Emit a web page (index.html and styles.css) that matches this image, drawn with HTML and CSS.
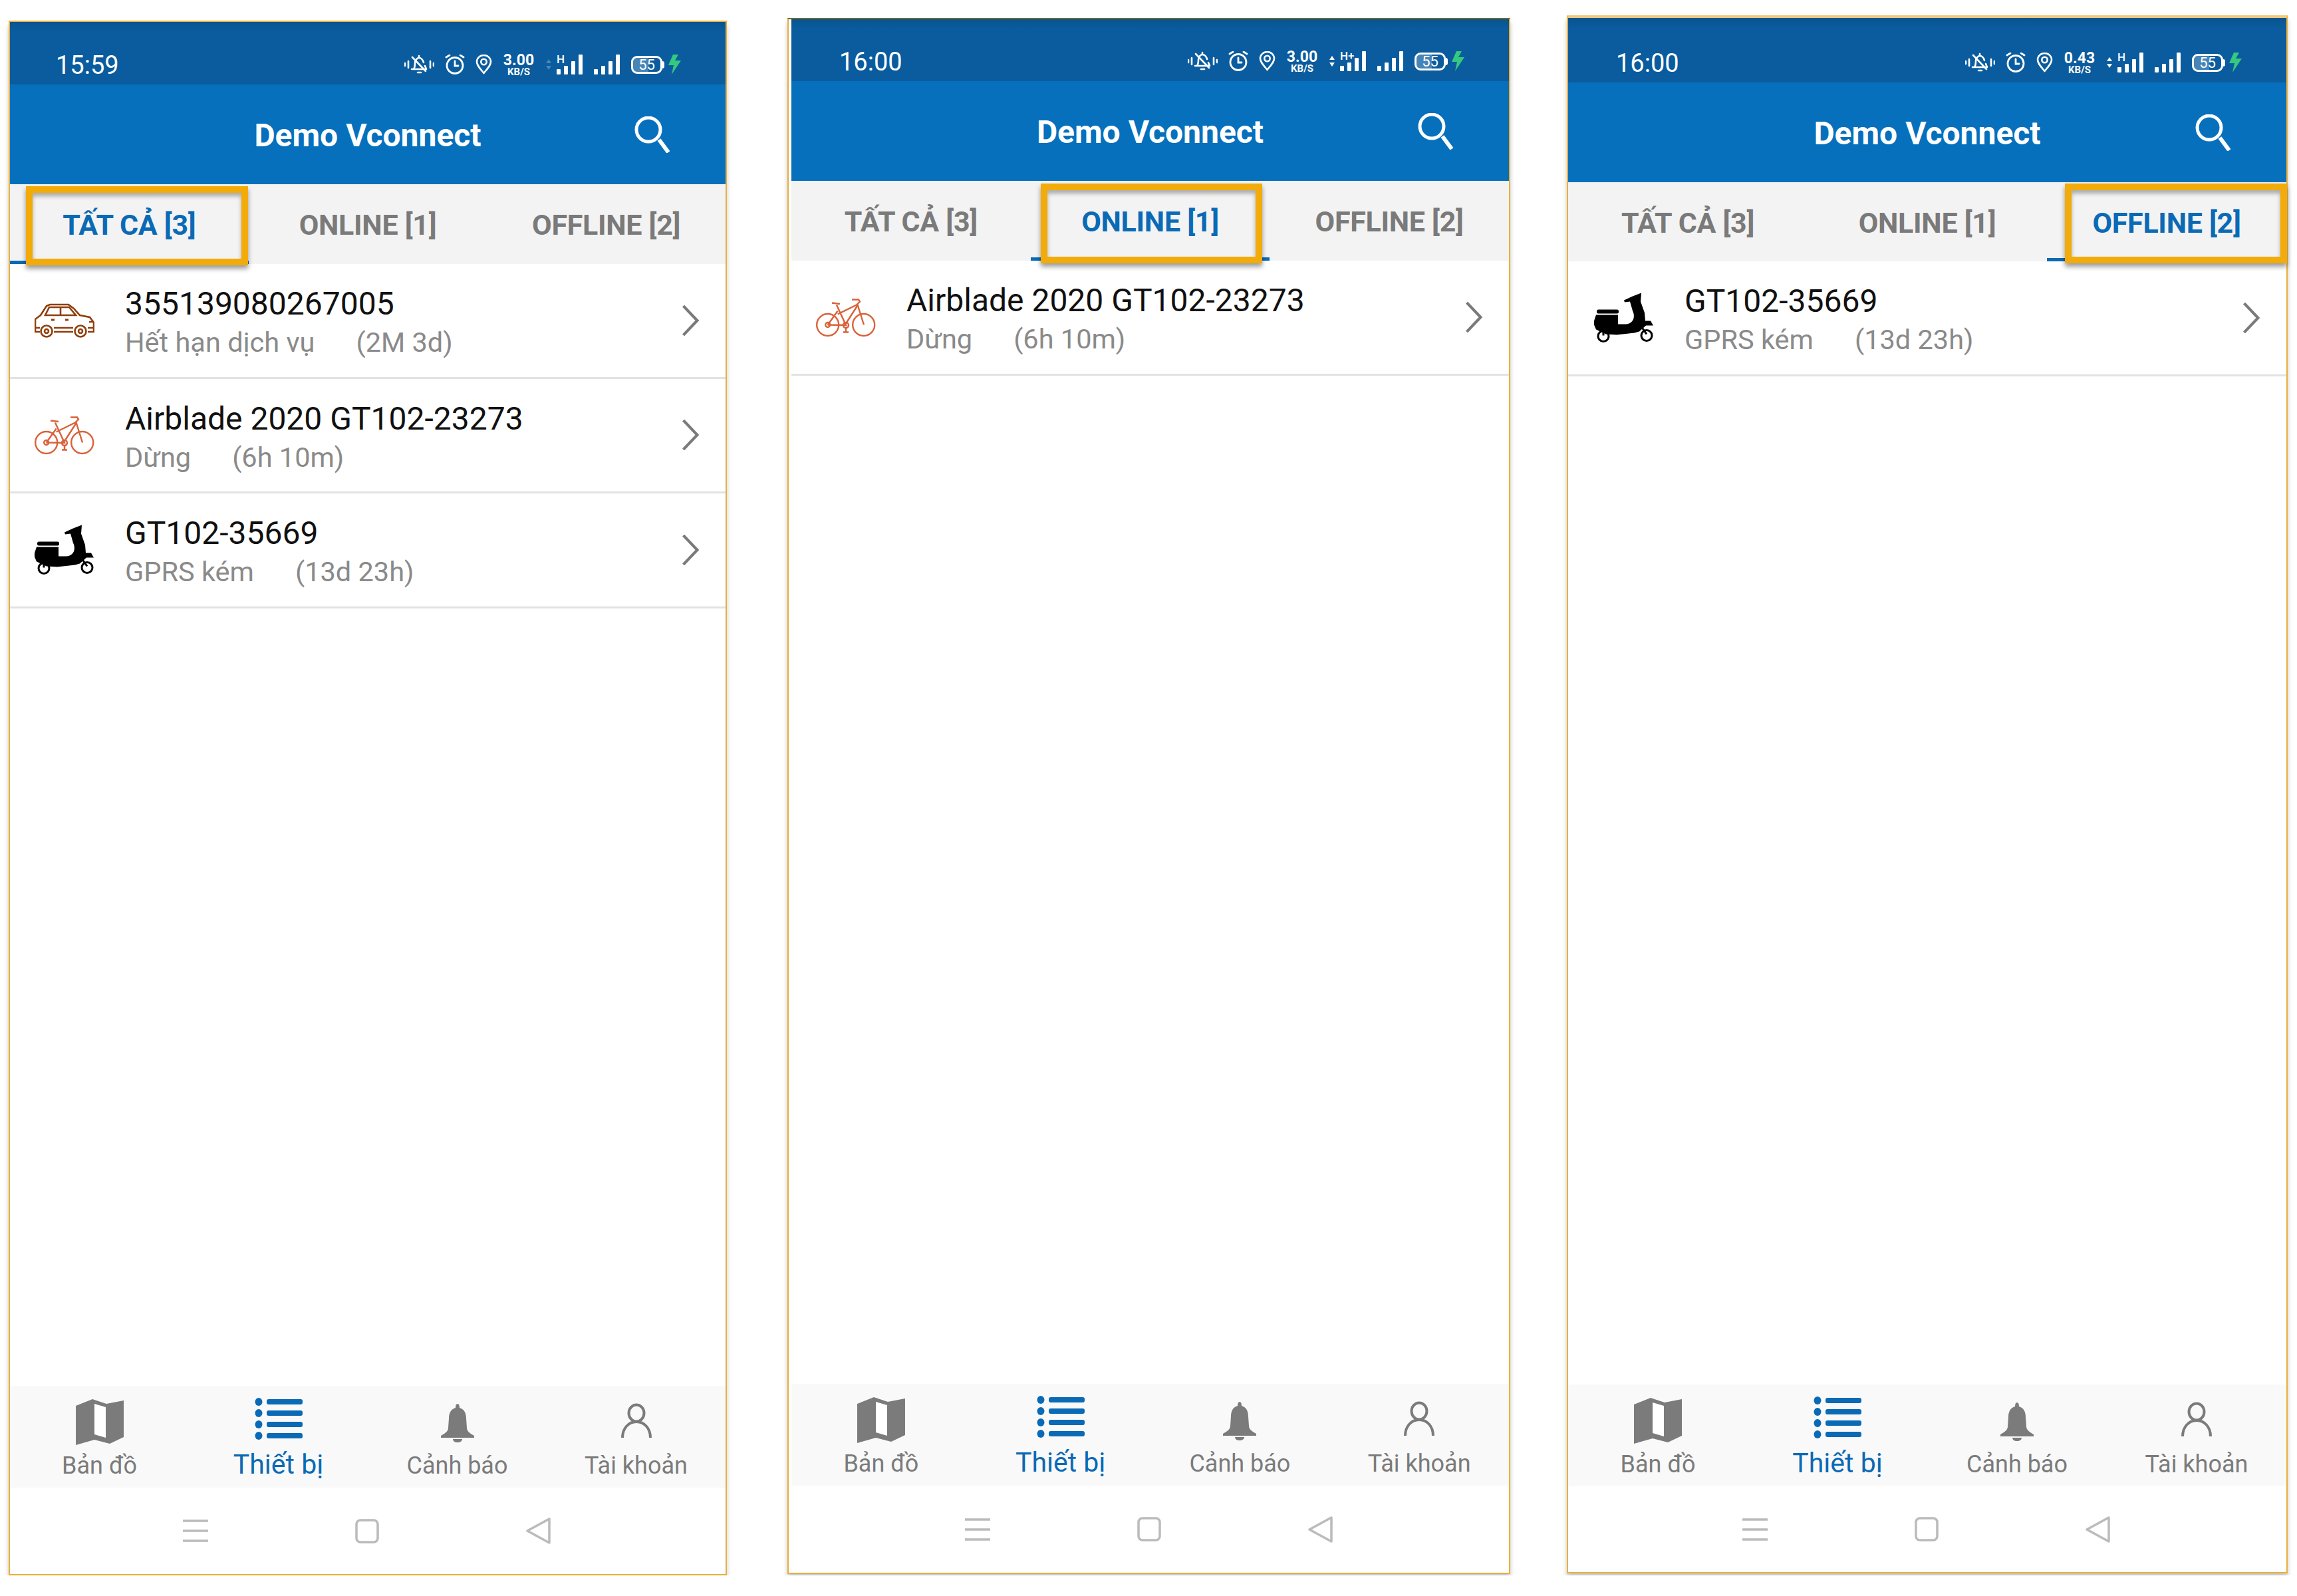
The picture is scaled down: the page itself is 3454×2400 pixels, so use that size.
FILE: index.html
```html
<!DOCTYPE html>
<html lang="vi">
<head>
<meta charset="utf-8">
<title>Demo Vconnect</title>
<link rel="stylesheet" href="styles.css">
</head>
<body>

<svg class="defs" width="0" height="0">
	<defs>
		<symbol id="i-bell-off" viewBox="0 0 45 30">
			<g fill="none" stroke="#fff" stroke-width="2.6" stroke-linecap="round" stroke-linejoin="round">
				<path d="M1 13v4M6 10v10M39 10v10M44 13v4"/>
				<path d="M22 2v2M14 22c2-3 2-6 2-9 0-4 3-8 6-8 3 0 6 3 7 7M31 17l2 5H11"/>
				<path d="M12 4l20 21"/>
				<path d="M20 27h5"/>
			</g>
		</symbol>
		<symbol id="i-alarm" viewBox="0 0 30 30">
			<g fill="none" stroke="#fff" stroke-width="2.8" stroke-linecap="round">
				<circle cx="15" cy="16.5" r="12"/>
				<path d="M15 10v7h5M2 4l5-3M28 4l-5-3"/>
			</g>
		</symbol>
		<symbol id="i-pin" viewBox="0 0 25 30">
			<path d="M12.5 28C6 20 2 16 2 11a10.5 10 0 0 1 21 0c0 5-4 9-10.5 17z" fill="none" stroke="#fff" stroke-width="2.6" stroke-linejoin="round"/>
			<circle cx="12.5" cy="11" r="4.2" fill="none" stroke="#fff" stroke-width="2.6"/>
		</symbol>
		<symbol id="i-signal" viewBox="0 0 40 30">
			<rect x="0" y="22" width="6" height="8" rx="1" fill="#fff"/>
			<rect x="11" y="17" width="6" height="13" rx="1" fill="#fff"/>
			<rect x="22" y="10" width="6" height="20" rx="1" fill="#fff"/>
			<rect x="33" y="0" width="6" height="30" rx="1" fill="#fff"/>
		</symbol>
		<symbol id="i-arrows" viewBox="0 0 10 16">
			<path d="M5 0l4 6H1zM5 16l4-6H1z"/>
		</symbol>
		<symbol id="i-bolt" viewBox="0 0 19 30">
			<path d="M7 0L0 16h8L5 30 19 9h-9l5-9z" fill="#35c97f"/>
		</symbol>
		<symbol id="i-search" viewBox="0 0 57 55">
			<circle cx="21" cy="20" r="18" fill="none" stroke="#fff" stroke-width="5"/>
			<path d="M37 35l14 19" fill="none" stroke="#fff" stroke-width="6"/>
		</symbol>
		<symbol id="i-car" viewBox="0 0 90 100">
			<g transform="translate(0 25)" fill="none" stroke="#8f3e0c" stroke-width="2.6">
				<path d="M8 42H1V23l8-6 9-14 5-2h28l8 6 9 10 15 3 6 8v14h-9M29 42h29"/>
				<path d="M16 17l6-12h30l10 12zM39 5v12M29 36h29M1 36h7M80 36h9M82 27h7"/>
				<path d="M25 24h5M46 24h5" stroke-width="3"/>
				<circle cx="18" cy="41" r="8.5"/><circle cx="18" cy="41" r="3"/>
				<circle cx="69" cy="41" r="8.5"/><circle cx="69" cy="41" r="3"/>
			</g>
		</symbol>
		<symbol id="i-bike" viewBox="0 0 90 100">
			<g transform="translate(0 20.5)" fill="none" stroke="#d9623a" stroke-width="2.4">
				<circle cx="17.7" cy="41" r="16.5"/><circle cx="71.7" cy="41" r="16.5"/>
				<circle cx="17.7" cy="41" r="3.5"/><circle cx="45" cy="41.5" r="4"/>
				<path d="M17.7 41L45 41.500 31 11M24 8l12 1.500M45 39l18-28M32.700 25L61 11M17.700 41L32.700 20M62 9l10 32M54 3h10l2 3-5 5M45 45v6M41 52h8"/>
			</g>
		</symbol>
		<symbol id="i-scooter" viewBox="0 0 90 100">
			<g transform="translate(0 12.5)">
				<rect x="4" y="25" width="33" height="6" rx="2.500"/>
				<path d="M0 42l3-9h33v14h12c12-1 14-12 10-20l-4-14-8 1-1-3 13-6 13-5-1 13 6 17 1 12h8l4 7H78l-10 9-7 2-27 3-16-1-15-7-3-7z"/>
				<g fill="none" stroke="#000" stroke-width="3">
					<circle cx="14" cy="65" r="8"/><circle cx="79" cy="64" r="8"/>
					<path d="M14 58v6M72 52l7 10"/>
				</g>
			</g>
		</symbol>
		<symbol id="i-chevron" viewBox="0 0 25 44">
			<path d="M2 1l20 21L2 43" fill="none" stroke="#7a7a7a" stroke-width="4"/>
		</symbol>
		<symbol id="i-map" viewBox="0 0 72 72">
			<path d="M0 12l25-10 21 7L72 4v55L51 69 28 63 0 71z" fill="#7b7b7b"/>
			<path d="M28 9l17 5v46l-17-5z" fill="#fff"/>
		</symbol>
		<symbol id="i-list" viewBox="0 0 72 72">
			<g fill="#0a6ab5">
				<ellipse cx="6" cy="6" rx="5.500" ry="6"/><ellipse cx="6" cy="23" rx="5.500" ry="6"/>
				<ellipse cx="6" cy="40" rx="5.500" ry="6"/><ellipse cx="6" cy="57" rx="5.500" ry="6"/>
				<rect x="18" y="2" width="54" height="8" rx="3"/><rect x="18" y="19" width="54" height="8" rx="3"/>
				<rect x="18" y="36" width="54" height="8" rx="3"/><rect x="18" y="53" width="54" height="8" rx="3"/>
			</g>
		</symbol>
		<symbol id="i-alert" viewBox="0 0 72 72">
			<path d="M36 9c2 0 3 2 3 6 7 2 10 8 10 16l1 14c0 5 4 8 11 12v3H11v-3c7-4 11-7 11-12l1-14c0-8 3-14 10-16 0-4 1-6 3-6zM29 62h14c0 3-3 5-7 5s-7-2-7-5z" fill="#7b7b7b"/>
		</symbol>
		<symbol id="i-user" viewBox="0 0 72 72">
			<g fill="none" stroke="#7b7b7b" stroke-width="4">
				<ellipse cx="36" cy="23" rx="11.500" ry="12.500"/>
				<path d="M15 60c0-14 9-24 21-24s21 10 21 24"/>
			</g>
		</symbol>
		<symbol id="i-menu" viewBox="0 0 38 34">
			<path d="M0 2h38M0 17h38M0 32h38" stroke="#bbb" stroke-width="3.500"/>
		</symbol>
		<symbol id="i-square" viewBox="0 0 36 37">
			<rect x="2" y="2" width="32" height="33" rx="6" fill="none" stroke="#bbb" stroke-width="3.500"/>
		</symbol>
		<symbol id="i-back" viewBox="0 0 37 40">
			<path d="M35 2v36L2 20z" fill="none" stroke="#bbb" stroke-width="3.500" stroke-linejoin="round"/>
		</symbol>
	</defs>
</svg>

<div class="page">

	<!-- tat ca -->
	<section class="phone phone-all">
		<div class="status">
			<span class="clock">15:59</span>
			<div class="status-icons">
				<svg class="st-bell"><use href="#i-bell-off"/></svg>
				<svg class="st-alarm"><use href="#i-alarm"/></svg>
				<svg class="st-pin"><use href="#i-pin"/></svg>
				<div class="speed"><b>3.00</b><small>KB/S</small></div>
				<div class="net">
					<svg class="st-arrows st-arrows-dim"><use href="#i-arrows"/></svg>
					<div class="sig-wrap"><span class="sig-type">H</span><svg class="st-signal"><use href="#i-signal"/></svg></div>
				</div>
				<svg class="st-signal"><use href="#i-signal"/></svg>
				<div class="power">
					<div class="battery"><span>55</span></div>
					<svg class="st-bolt"><use href="#i-bolt"/></svg>
				</div>
			</div>
		</div>
		<header class="appbar">
			<h1>Demo Vconnect</h1>
			<svg class="search"><use href="#i-search"/></svg>
		</header>
		<nav class="tabs">
			<div class="tab active">TẤT CẢ [3]<i class="highlight"></i></div>
			<div class="tab">ONLINE [1]</div>
			<div class="tab">OFFLINE [2]</div>
		</nav>
		<ul class="list">
			<li class="row">
				<svg class="veh"><use href="#i-car"/></svg>
				<div class="row-text">
					<div class="row-title">355139080267005</div>
					<div class="row-sub"><span>Hết hạn dịch vụ</span><span>(2M 3d)</span></div>
				</div>
				<svg class="chevron"><use href="#i-chevron"/></svg>
			</li>
			<li class="row">
				<svg class="veh"><use href="#i-bike"/></svg>
				<div class="row-text">
					<div class="row-title">Airblade 2020 GT102-23273</div>
					<div class="row-sub"><span>Dừng</span><span>(6h 10m)</span></div>
				</div>
				<svg class="chevron"><use href="#i-chevron"/></svg>
			</li>
			<li class="row">
				<svg class="veh"><use href="#i-scooter"/></svg>
				<div class="row-text">
					<div class="row-title">GT102-35669</div>
					<div class="row-sub"><span>GPRS kém</span><span>(13d 23h)</span></div>
				</div>
				<svg class="chevron"><use href="#i-chevron"/></svg>
			</li>
		</ul>
		<footer class="bottom">
			<div class="bottom-item"><svg><use href="#i-map"/></svg><span>Bản đồ</span></div>
			<div class="bottom-item active"><svg><use href="#i-list"/></svg><span>Thiết bị</span></div>
			<div class="bottom-item"><svg><use href="#i-alert"/></svg><span>Cảnh báo</span></div>
			<div class="bottom-item"><svg><use href="#i-user"/></svg><span>Tài khoản</span></div>
		</footer>
		<div class="softkeys">
			<svg class="key-menu"><use href="#i-menu"/></svg>
			<svg class="key-square"><use href="#i-square"/></svg>
			<svg class="key-back"><use href="#i-back"/></svg>
		</div>
	</section>

	<!-- online -->
	<section class="phone phone-online">
		<div class="status">
			<span class="clock">16:00</span>
			<div class="status-icons">
				<svg class="st-bell"><use href="#i-bell-off"/></svg>
				<svg class="st-alarm"><use href="#i-alarm"/></svg>
				<svg class="st-pin"><use href="#i-pin"/></svg>
				<div class="speed"><b>3.00</b><small>KB/S</small></div>
				<div class="net">
					<svg class="st-arrows"><use href="#i-arrows"/></svg>
					<div class="sig-wrap"><span class="sig-type">H+</span><svg class="st-signal"><use href="#i-signal"/></svg></div>
				</div>
				<svg class="st-signal"><use href="#i-signal"/></svg>
				<div class="power">
					<div class="battery"><span>55</span></div>
					<svg class="st-bolt"><use href="#i-bolt"/></svg>
				</div>
			</div>
		</div>
		<header class="appbar">
			<h1>Demo Vconnect</h1>
			<svg class="search"><use href="#i-search"/></svg>
		</header>
		<nav class="tabs">
			<div class="tab">TẤT CẢ [3]</div>
			<div class="tab active">ONLINE [1]<i class="highlight"></i></div>
			<div class="tab">OFFLINE [2]</div>
		</nav>
		<ul class="list">
			<li class="row">
				<svg class="veh"><use href="#i-bike"/></svg>
				<div class="row-text">
					<div class="row-title">Airblade 2020 GT102-23273</div>
					<div class="row-sub"><span>Dừng</span><span>(6h 10m)</span></div>
				</div>
				<svg class="chevron"><use href="#i-chevron"/></svg>
			</li>
		</ul>
		<footer class="bottom">
			<div class="bottom-item"><svg><use href="#i-map"/></svg><span>Bản đồ</span></div>
			<div class="bottom-item active"><svg><use href="#i-list"/></svg><span>Thiết bị</span></div>
			<div class="bottom-item"><svg><use href="#i-alert"/></svg><span>Cảnh báo</span></div>
			<div class="bottom-item"><svg><use href="#i-user"/></svg><span>Tài khoản</span></div>
		</footer>
		<div class="softkeys">
			<svg class="key-menu"><use href="#i-menu"/></svg>
			<svg class="key-square"><use href="#i-square"/></svg>
			<svg class="key-back"><use href="#i-back"/></svg>
		</div>
	</section>

	<!-- offline -->
	<section class="phone phone-offline">
		<div class="status">
			<span class="clock">16:00</span>
			<div class="status-icons">
				<svg class="st-bell"><use href="#i-bell-off"/></svg>
				<svg class="st-alarm"><use href="#i-alarm"/></svg>
				<svg class="st-pin"><use href="#i-pin"/></svg>
				<div class="speed"><b>0.43</b><small>KB/S</small></div>
				<div class="net">
					<svg class="st-arrows"><use href="#i-arrows"/></svg>
					<div class="sig-wrap"><span class="sig-type">H</span><svg class="st-signal"><use href="#i-signal"/></svg></div>
				</div>
				<svg class="st-signal"><use href="#i-signal"/></svg>
				<div class="power">
					<div class="battery"><span>55</span></div>
					<svg class="st-bolt"><use href="#i-bolt"/></svg>
				</div>
			</div>
		</div>
		<header class="appbar">
			<h1>Demo Vconnect</h1>
			<svg class="search"><use href="#i-search"/></svg>
		</header>
		<nav class="tabs">
			<div class="tab">TẤT CẢ [3]</div>
			<div class="tab">ONLINE [1]</div>
			<div class="tab active">OFFLINE [2]<i class="highlight"></i></div>
		</nav>
		<ul class="list">
			<li class="row">
				<svg class="veh"><use href="#i-scooter"/></svg>
				<div class="row-text">
					<div class="row-title">GT102-35669</div>
					<div class="row-sub"><span>GPRS kém</span><span>(13d 23h)</span></div>
				</div>
				<svg class="chevron"><use href="#i-chevron"/></svg>
			</li>
		</ul>
		<footer class="bottom">
			<div class="bottom-item"><svg><use href="#i-map"/></svg><span>Bản đồ</span></div>
			<div class="bottom-item active"><svg><use href="#i-list"/></svg><span>Thiết bị</span></div>
			<div class="bottom-item"><svg><use href="#i-alert"/></svg><span>Cảnh báo</span></div>
			<div class="bottom-item"><svg><use href="#i-user"/></svg><span>Tài khoản</span></div>
		</footer>
		<div class="softkeys">
			<svg class="key-menu"><use href="#i-menu"/></svg>
			<svg class="key-square"><use href="#i-square"/></svg>
			<svg class="key-back"><use href="#i-back"/></svg>
		</div>
	</section>

</div>
</body>
</html>
```

FILE: styles.css
```css
* {
	box-sizing: border-box;
	font-family: Roboto, 'Liberation Sans', sans-serif;
}

body {
	margin: 0;
	background: #fff;
}

.defs {
	position: absolute;
}

.page {
	display: flex;
	align-items: flex-start;
	padding-left: 13px;
}

/* each screenshot was pasted a little differently */
.phone {
	display: flex;
	flex-direction: column;
	border: 2px solid #e8b03c;
	background: #fff;
	box-shadow: 0 7px 7px rgba(0,0,0,.22);
}

.phone-all {
	width: 1080px;
	height: 2338px;
	margin-top: 31px;
	--status-h: 94px;
	--tabs-h: 120px;
	--soft-h: 130px;
	--clock-left: 69px;
	--row-left: 37px;
}

.phone-online {
	width: 1087px;
	height: 2340px;
	margin: 27px 0 0 91px;
	padding-left: 4px;
	border-top-color: #6e6b2e;
	--status-h: 93px;
	--tabs-h: 120px;
	--soft-h: 131px;
	--clock-left: 72px;
	--row-left: 37px;
}

.phone-offline {
	width: 1084px;
	height: 2343px;
	margin: 23px 0 0 85px;
	border-top: 4px solid #eec87f;
	--status-h: 97px;
	--tabs-h: 119px;
	--soft-h: 129px;
	--clock-left: 72px;
	--row-left: 39px;
}

/* status bar */
.status {
	flex: none;
	height: var(--status-h);
	display: flex;
	justify-content: space-between;
	align-items: flex-end;
	padding: 0 67px 14px var(--clock-left);
	background: linear-gradient(#09548f, #0a5c9e 16%);
	color: #fff;
}

.clock {
	margin-bottom: -7px;
	font-size: 38px;
	line-height: 44px;
}

.status-icons {
	display: flex;
	align-items: center;
	gap: 16px;
	height: 32px;
}

.status-icons svg {
	display: block;
	flex: none;
	height: 30px;
}

.st-bell { width: 45px; }
.st-alarm { width: 30px; }
.st-pin { width: 25px; }
.st-signal { width: 40px; }

.status-icons .st-arrows {
	width: 10px;
	height: 16px;
	fill: #fff;
}

.status-icons .st-arrows-dim {
	fill: #4a86b8;
}

.status-icons .st-bolt {
	width: 19px;
}

.speed {
	width: 48px;
	text-align: center;
	color: #fff;
}

.speed b {
	display: block;
	font-size: 23px;
	line-height: 21px;
	font-weight: 700;
}

.speed small {
	display: block;
	font-size: 15px;
	line-height: 14px;
	font-weight: 700;
}

.net,
.power {
	display: flex;
	align-items: center;
	gap: 7px;
}

.sig-wrap {
	position: relative;
}

.sig-type {
	position: absolute;
	left: 0;
	top: -1px;
	font-size: 17px;
	line-height: 17px;
	font-weight: 500;
}

.battery {
	position: relative;
	width: 47px;
	height: 27px;
	margin-right: 2px;
	border: 3px solid #fff;
	border-radius: 9px;
	background: linear-gradient(90deg, rgba(255,255,255,.25) 55%, transparent 55%);
	text-align: center;
}

.battery:after {
	content: '';
	position: absolute;
	top: 5px;
	right: -6px;
	width: 3px;
	height: 11px;
	border-radius: 0 3px 3px 0;
	background: #fff;
}

.battery span {
	display: block;
	font-size: 22px;
	line-height: 21px;
}

/* app bar */
.appbar {
	flex: none;
	height: 150px;
	display: grid;
	grid-template-columns: 1fr auto 1fr;
	align-items: center;
	padding: 0 80px;
	background: #0670bd;
	color: #fff;
}

.appbar h1 {
	grid-column: 2;
	margin: 4px 0 0;
	font-size: 48px;
	line-height: 56px;
	font-weight: 700;
}

.search {
	grid-column: 3;
	justify-self: end;
	width: 57px;
	height: 55px;
}

/* tabs */
.tabs {
	flex: none;
	height: var(--tabs-h);
	display: grid;
	grid-template-columns: repeat(3, 1fr);
	background: #f3f3f3;
}

.tab {
	position: relative;
	display: flex;
	justify-content: center;
	align-items: center;
	padding-top: 2px;
	font-size: 43px;
	font-weight: 700;
	letter-spacing: -.3px;
	color: #7a7a7a;
}

.tab.active {
	color: #0a6ab5;
	border-bottom: 5px solid #0a6ab5;
	padding-bottom: 0;
	padding-top: 7px;
}

/* the orange annotation box sits on top of the tab */
.highlight {
	position: absolute;
	top: 3px;
	left: 24px;
	width: 334px;
	height: 119px;
	border: 10px solid #f2ab09;
	box-shadow: 0 5px 7px rgba(0,0,0,.4), inset 0 5px 6px rgba(0,0,0,.3);
}

.phone-online .highlight {
	top: 4px;
	left: 15px;
	width: 333px;
	height: 120px;
}

.phone-offline .highlight {
	top: 2px;
	left: 27px;
	height: 120px;
}

/* vehicles */
.list {
	flex: 1;
	margin: 0;
	padding: 0;
	list-style: none;
}

.row {
	height: 172.5px;
	display: flex;
	align-items: center;
	padding: 0 39px 0 var(--row-left);
	border-bottom: 3px solid #e2e2e2;
}

.veh {
	flex: none;
	width: 90px;
	height: 100px;
	margin-right: 46px;
}

.row-text {
	padding-top: 11px;
}

.row-title {
	font-size: 48px;
	line-height: 56px;
	color: #111;
}

.row-sub {
	display: flex;
	gap: 62px;
	font-size: 41.5px;
	line-height: 60px;
	color: #8a8a8a;
}

.chevron {
	flex: none;
	width: 27px;
	height: 46px;
	margin-left: auto;
}

/* bottom menu */
.bottom {
	flex: none;
	height: 153px;
	display: grid;
	grid-template-columns: repeat(4, 1fr);
	background: #f9f9f9;
}

.bottom-item {
	display: flex;
	flex-direction: column;
	align-items: center;
	padding-top: 18px;
}

.bottom-item svg {
	flex: none;
	width: 72px;
	height: 72px;
}

.bottom-item span {
	margin-top: 5px;
	font-size: 36px;
	line-height: 50px;
	color: #7b7b7b;
}

.bottom-item.active span {
	margin-top: 3px;
	font-size: 41px;
	color: #0a6ab5;
}

.softkeys {
	flex: none;
	height: var(--soft-h);
	display: flex;
	justify-content: center;
	align-items: center;
	gap: 221px;
	padding-right: 4px;
	background: #fff;
}

.key-menu {
	width: 38px;
	height: 34px;
}

.key-square {
	width: 36px;
	height: 37px;
}

.key-back {
	width: 37px;
	height: 40px;
}
```
